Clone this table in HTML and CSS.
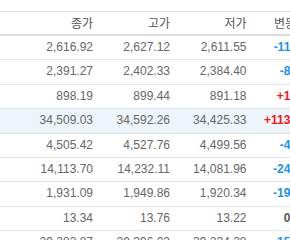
FILE: index.html
```html
<!DOCTYPE html>
<html lang="ko">
<head>
<meta charset="utf-8">
<link rel="stylesheet" href="styles.css">
</head>
<body>
<div class="wrap">
<table class="quotes">
  <colgroup>
    <col class="c1"><col class="c2"><col class="c3"><col class="c4">
  </colgroup>
  <thead>
    <tr><th>종가</th><th>고가</th><th>저가</th><th>변동폭</th></tr>
  </thead>
  <tbody>
    <tr><td>2,616.92</td><td>2,627.12</td><td>2,611.55</td><td class="down">-11.24</td></tr>
    <tr><td>2,391.27</td><td>2,402.33</td><td>2,384.40</td><td class="down">-8.15</td></tr>
    <tr><td>898.19</td><td>899.44</td><td>891.18</td><td class="up">+1.87</td></tr>
    <tr class="hl"><td>34,509.03</td><td>34,592.26</td><td>34,425.33</td><td class="up">+113.27</td></tr>
    <tr><td>4,505.42</td><td>4,527.76</td><td>4,499.56</td><td class="down">-4.31</td></tr>
    <tr><td>14,113.70</td><td>14,232.11</td><td>14,081.96</td><td class="down">-24.87</td></tr>
    <tr><td>1,931.09</td><td>1,949.86</td><td>1,920.34</td><td class="down">-19.42</td></tr>
    <tr><td>13.34</td><td>13.76</td><td>13.22</td><td class="flat">0.00</td></tr>
    <tr><td>29,282.87</td><td>29,396.03</td><td>29,234.28</td><td class="down">-15.62</td></tr>
  </tbody>
</table>
</div>
</body>
</html>
```

FILE: styles.css
```css
html, body {
  margin: 0;
  padding: 0;
  background: #fff;
  overflow: hidden;
}
.wrap {
  padding-top: 11px;
  width: 340px;
}
.quotes {
  border-collapse: collapse;
  table-layout: fixed;
  width: 340px;
  font-family: "Liberation Sans", Arial, "Noto Sans CJK KR", sans-serif;
  font-size: 12px;
  color: #666;
}
.c1 { width: 101px; }
.c2 { width: 77px; }
.c3 { width: 76.5px; }
.c4 { width: 85.5px; }
.quotes th {
  font-family: "Noto Sans CJK KR", "Liberation Sans", sans-serif;
  font-weight: normal;
  color: #555;
  text-align: right;
  padding: 0 8px;
  height: 22px;
  line-height: 22px;
  border-top: 1px solid #dcdcdc;
  border-bottom: 2px solid #dcdcdc;
  white-space: nowrap;
  overflow: hidden;
}
.quotes th:last-child { padding-right: 33px; }
.quotes td {
  text-align: right;
  padding: 0 8px;
  height: 23.4px;
  line-height: 23.4px;
  border-bottom: 1px solid #e4e4e4;
  white-space: nowrap;
}
.quotes td:last-child { padding-right: 33px; font-weight: bold; }
.quotes tr.hl td { background: #eef4fb; }
.down { color: #1e8fef; }
.up { color: #f01818; }
.flat { color: #555; }
```
